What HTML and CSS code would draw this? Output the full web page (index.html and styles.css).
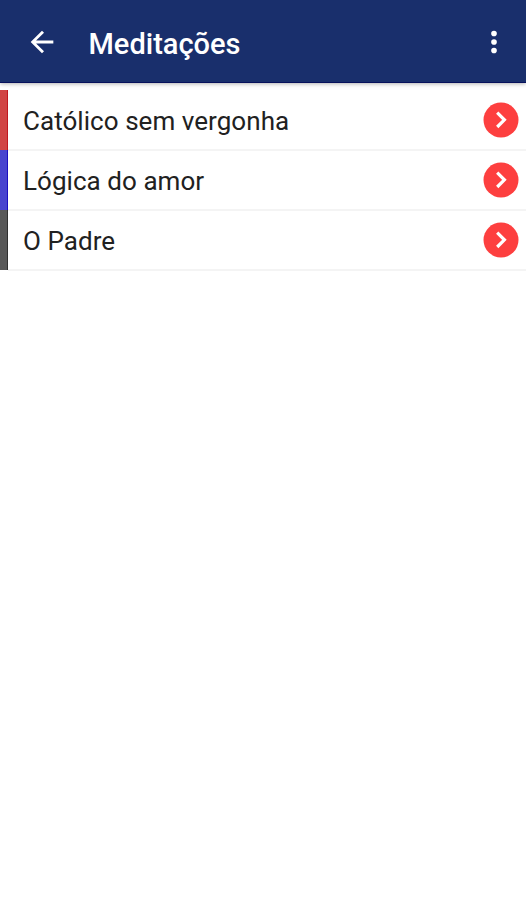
FILE: index.html
```html
<!DOCTYPE html>
<html lang="pt-BR">
<head>
    <meta charset="UTF-8">
    <meta name="viewport" content="width=device-width, initial-scale=1.0">
    <title>Meditações</title>
    <link rel="stylesheet" href="styles.css">
</head>
<body>
    <header class="barra">
        <svg class="voltar" viewBox="0 0 24 24"><path d="M20 11H7.83l5.59-5.59L12 4l-8 8 8 8 1.41-1.41L7.83 13H20v-2z"/></svg>
        <h1>Meditações</h1>
        <svg class="menu" viewBox="0 0 24 24"><path d="M12 8a2 2 0 1 0 0-4 2 2 0 0 0 0 4zm0 2a2 2 0 1 0 0 4 2 2 0 0 0 0-4zm0 6a2 2 0 1 0 0 4 2 2 0 0 0 0-4z"/></svg>
    </header>
    <ul class="lista">
        <li class="item vermelho">
            <span>Católico sem vergonha</span>
            <svg class="seta" viewBox="0 0 36 36"><circle cx="18" cy="18" r="17.5"/><path d="M14.2 10.6l7.2 7.2-7.2 7.2"/></svg>
        </li>
        <li class="item azul">
            <span>Lógica do amor</span>
            <svg class="seta" viewBox="0 0 36 36"><circle cx="18" cy="18" r="17.5"/><path d="M14.2 10.6l7.2 7.2-7.2 7.2"/></svg>
        </li>
        <li class="item cinza">
            <span>O Padre</span>
            <svg class="seta" viewBox="0 0 36 36"><circle cx="18" cy="18" r="17.5"/><path d="M14.2 10.6l7.2 7.2-7.2 7.2"/></svg>
        </li>
    </ul>
</body>
</html>
```
FILE: styles.css
```css
body {
    margin: 0;
    background-color: #ffffff;
    color: #212121;
    font-family: Roboto, sans-serif;
}
.barra {
    display: flex;
    align-items: center;
    height: 83px;
    padding: 2px 15px 0 24.5px;
    box-sizing: border-box;
    background: #192f6c;
    border-bottom: 1px solid #07115c;
    color: #fff;
    box-shadow: 0 1px 4px rgba(0, 0, 0, 0.3);
}
.barra h1 {
    flex: 1;
    margin: 4px 0 0 30px;
    font-size: 29px;
    font-weight: 500;
    line-height: 36px;
}
.voltar,
.menu {
    width: 34px;
    height: 34px;
    fill: #fff;
}
.lista {
    list-style: none;
    margin: 8px 0 0;
    padding: 0;
}
.item {
    display: flex;
    align-items: center;
    height: 60px;
    padding-right: 7px;
    box-sizing: border-box;
    background: linear-gradient(#f4f4f4, #f4f4f4) 8px 100% / 100% 2px no-repeat;
}
.item::before {
    content: "";
    width: 8px;
    height: 60px;
    box-sizing: border-box;
    margin: 0 15px 2px 0;
    border-right: 1px solid;
}
.item span {
    flex: 1;
    color: #212121;
    font-size: 26px;
    line-height: 32px;
    letter-spacing: 0.05px;
}
.vermelho::before {
    background: #d14545;
    border-color: #c01820;
}
.azul::before {
    background: #4844cf;
    border-color: #1c10c0;
}
.cinza::before {
    background: #585858;
    border-color: #303030;
}
.seta {
    width: 36px;
    height: 36px;
    margin-bottom: 2px;
}
.seta circle {
    fill: #fd3f3f;
}
.seta path {
    fill: none;
    stroke: #fff;
    stroke-width: 3.2;
}
```
